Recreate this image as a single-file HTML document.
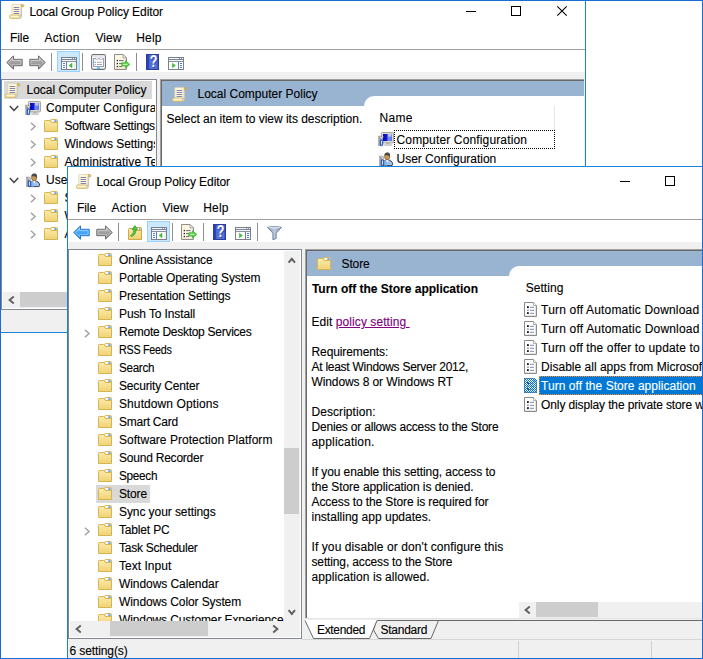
<!DOCTYPE html>
<html><head><meta charset="utf-8"><title>Local Group Policy Editor</title><style>
html,body{margin:0;padding:0;}
body{width:703px;height:659px;position:relative;overflow:hidden;background:#fff;font-family:"Liberation Sans",sans-serif;font-size:12px;color:#000;}
div,span.t,svg{position:absolute;}
span.t{-webkit-text-stroke:0.12px currentColor;white-space:pre;line-height:16px;height:16px;transform-origin:0 50%;}
svg{overflow:visible;}
</style></head><body>
<div style="left:0px;top:0px;width:586px;height:333px;background:#ffffff;border:1px solid #1883d7;box-sizing:border-box;"></div>
<svg style="left:9px;top:4px;" width="16" height="15" viewBox="0 0 16 15"><rect x="11.6" y="1.6" width="1.5" height="10.6" fill="#c4c4c4"/><path d="M2.8 1.4 Q2.8 0.4 3.9 0.4 H12.8 Q11.9 1.3 11.9 3 V11.6 Q11.9 12.8 10.8 12.9 H2.8 Z" fill="#fdf6d6" stroke="#d6cfb4" stroke-width="0.7"/><path d="M12.4 0.5 Q14.9 0.1 15 1.8 Q15 3.1 13 2.9 Q12.2 1.8 12.4 0.5 Z" fill="#e6bf58" stroke="#b8923e" stroke-width="0.5"/><rect x="4.6" y="3" width="5.6" height="1" fill="#8785b4"/><rect x="4.6" y="5" width="5.6" height="1" fill="#8785b4"/><rect x="4.6" y="7" width="5.6" height="1" fill="#8785b4"/><rect x="4.6" y="9" width="5.6" height="1" fill="#8785b4"/><ellipse cx="10.9" cy="12.7" rx="1.5" ry="1.7" fill="#f2f2f2" stroke="#a4a4a4" stroke-width="0.6"/><rect x="0.4" y="11" width="10.6" height="3.4" rx="1.6" fill="#fbe7a2" stroke="#c9ae66" stroke-width="0.8"/><rect x="1.6" y="11.8" width="8" height="1.1" fill="#fffbe6"/></svg>
<span id="t1" class="t" style="left:29.5px;top:4px;letter-spacing:-0.076px;">Local Group Policy Editor</span>
<div style="left:466px;top:11px;width:10px;height:1px;background:#000;"></div>
<div style="left:511px;top:6px;width:10px;height:10px;border:1px solid #000;box-sizing:border-box;"></div>
<svg style="left:557px;top:6px;" width="10" height="10" viewBox="0 0 10 10"><path d="M0.3 0.3 L9.7 9.7 M9.7 0.3 L0.3 9.7" stroke="#000" stroke-width="1.1" fill="none"/></svg>
<span id="t2" class="t" style="left:10.0px;top:30px;letter-spacing:-0.061px;">File</span>
<span id="t3" class="t" style="left:44.5px;top:30px;letter-spacing:0.290px;">Action</span>
<span id="t4" class="t" style="left:95.5px;top:30px;letter-spacing:0.076px;">View</span>
<span id="t5" class="t" style="left:136.3px;top:30px;letter-spacing:0.153px;">Help</span>
<div style="left:1px;top:49px;width:584px;height:1px;background:#a0a0a0;"></div>
<svg style="left:6px;top:55px;" width="17" height="15" viewBox="0 0 17 15"><defs><linearGradient id="ga6_55" x1="0" y1="0" x2="0" y2="1"><stop offset="0" stop-color="#c4c4c4"/><stop offset="1" stop-color="#7e7e7e"/></linearGradient></defs><path d="M0.8 7.5 L7.5 0.8 V4.3 H16.2 V10.7 H7.5 V14.2 Z" fill="url(#ga6_55)" stroke="#6e6e6e" stroke-width="1" stroke-linejoin="round"/><path d="M2.5 7.5 L6.5 3.4 V5.4 H15.1 V9.6 H6.5 V11.6 Z" fill="none" stroke="#ffffff" stroke-opacity="0.42" stroke-width="0.9"/></svg>
<svg style="left:29px;top:55px;" width="17" height="15" viewBox="0 0 17 15"><defs><linearGradient id="ga29_55" x1="0" y1="0" x2="0" y2="1"><stop offset="0" stop-color="#c4c4c4"/><stop offset="1" stop-color="#7e7e7e"/></linearGradient></defs><path d="M0.8 7.5 L7.5 0.8 V4.3 H16.2 V10.7 H7.5 V14.2 Z" transform="translate(17,0) scale(-1,1)" fill="url(#ga29_55)" stroke="#6e6e6e" stroke-width="1" stroke-linejoin="round"/><path d="M2.5 7.5 L6.5 3.4 V5.4 H15.1 V9.6 H6.5 V11.6 Z" transform="translate(17,0) scale(-1,1)" fill="none" stroke="#ffffff" stroke-opacity="0.42" stroke-width="0.9"/></svg>
<div style="left:51px;top:53px;width:1px;height:18px;background:#8e8e8e;"></div>
<div style="left:57px;top:51px;width:23px;height:21px;background:#cce8ff;border:1px solid #99d1ff;box-sizing:border-box;"></div>
<svg style="left:61px;top:57px;shape-rendering:crispEdges;" width="16" height="13" viewBox="0 0 16 13"><rect x="0" y="0" width="16" height="13" fill="#7c8088"/><rect x="1" y="1" width="14" height="1" fill="#f4f6fa"/><rect x="11" y="1" width="1" height="1" fill="#8a8f99"/><rect x="13" y="1" width="1" height="1" fill="#8a8f99"/><rect x="1" y="2" width="14" height="1" fill="#7686a6"/><rect x="1" y="3" width="14" height="1" fill="#f4f6fa"/><rect x="1" y="4" width="14" height="1" fill="#8b909a"/><rect x="1" y="5" width="4" height="7" fill="#ffffff"/><rect x="5" y="5" width="1" height="7" fill="#6c7c9c"/><rect x="6" y="5" width="9" height="7" fill="#ffffff"/><rect x="12.6" y="5.4" width="2" height="6.2" fill="#efefef"/><rect x="2" y="6" width="2" height="1" fill="#3f86d8"/><rect x="2" y="8" width="2" height="1" fill="#3f86d8"/><rect x="2" y="10" width="2" height="1" fill="#3f86d8"/><path d="M8 8.5 L11 6.2 V10.8 Z" fill="#3fc03a" stroke="#35a82f" stroke-width="0.5" shape-rendering="auto"/></svg>
<div style="left:82px;top:53px;width:1px;height:18px;background:#8e8e8e;"></div>
<svg style="left:91px;top:54px;" width="15" height="16" viewBox="0 0 15 16"><rect x="0.6" y="0.6" width="13.8" height="14.8" rx="1.6" fill="#ffffff" stroke="#6f6f74" stroke-width="1.1"/><rect x="1.4" y="1.4" width="12.2" height="1.6" fill="#e4e6ee"/><rect x="2.5" y="4.5" width="10" height="8" fill="#ffffff" stroke="#9c9cc0" stroke-width="1"/><rect x="4.6" y="4" width="3" height="1.6" fill="#ffffff" stroke="#9c9cc0" stroke-width="0.5"/><rect x="8.4" y="4" width="3" height="1.6" fill="#ffffff" stroke="#9c9cc0" stroke-width="0.5"/><rect x="3.6" y="7.6" width="1.3" height="1.3" fill="#28b4f4"/><rect x="6" y="7.8" width="5" height="1" fill="#a8a8a8"/><rect x="3.6" y="10" width="1.3" height="1.1" fill="#a0a0a0"/><rect x="6" y="10" width="5" height="1" fill="#a8a8a8"/><rect x="6" y="13.4" width="3" height="1.4" fill="#25b0f4"/><rect x="10" y="13.6" width="2.4" height="1" fill="#d0d0d0"/></svg>
<svg style="left:114px;top:54px;" width="17" height="16" viewBox="0 0 17 16"><path d="M0.5 0.5 H9 L12.5 4 V15.5 H0.5 Z" fill="#fdf7df" stroke="#8f8f8f" stroke-width="1"/><path d="M9 0.5 V4 H12.5 Z" fill="#ffffff" stroke="#8f8f8f" stroke-width="0.8"/><rect x="11" y="4.4" width="1" height="10.6" fill="#efe6c4"/><rect x="1" y="14" width="11" height="1" fill="#efe6c4"/><rect x="2.7" y="5.9" width="1.3" height="1.3" fill="#222"/><rect x="5" y="6" width="4.6" height="1.1" fill="#74749c"/><rect x="2.7" y="8.9" width="1.3" height="1.3" fill="#222"/><rect x="5" y="9" width="3" height="1.1" fill="#74749c"/><rect x="2.7" y="11.9" width="1.3" height="1.3" fill="#222"/><rect x="5" y="12" width="3" height="1.1" fill="#74749c"/><path d="M7.8 8.8 H11.4 V6.8 L15.8 10.4 L11.4 14 V12 H7.8 Z" fill="#5fd24a" stroke="#3fae33" stroke-width="0.8" stroke-linejoin="round"/><rect x="9" y="9.9" width="4.4" height="1" fill="#c9f5bf"/></svg>
<div style="left:136px;top:53px;width:1px;height:18px;background:#8e8e8e;"></div>
<svg style="left:146px;top:54px;" width="13" height="16" viewBox="0 0 13 16"><rect x="0.5" y="0.5" width="12" height="15" fill="#5470da" stroke="#2b3c9e"/><rect x="1" y="1" width="2.2" height="14" fill="#2d44b4"/><rect x="11" y="1" width="1" height="14" fill="#3f59c6"/><g transform="translate(7.6,0) scale(0.78,1)"><text x="0.8" y="13.7" text-anchor="middle" font-family="Liberation Sans, sans-serif" font-weight="bold" font-size="16" fill="#1d2c7a" opacity="0.6">?</text><text x="0" y="13.2" text-anchor="middle" font-family="Liberation Sans, sans-serif" font-weight="bold" font-size="16" fill="#ffffff">?</text></g></svg>
<svg style="left:168px;top:57px;shape-rendering:crispEdges;" width="16" height="13" viewBox="0 0 16 13"><rect x="0" y="0" width="16" height="13" fill="#7c8088"/><rect x="1" y="1" width="14" height="1" fill="#f4f6fa"/><rect x="11" y="1" width="1" height="1" fill="#8a8f99"/><rect x="13" y="1" width="1" height="1" fill="#8a8f99"/><rect x="1" y="2" width="14" height="1" fill="#7686a6"/><rect x="1" y="3" width="14" height="1" fill="#f4f6fa"/><rect x="1" y="4" width="14" height="1" fill="#8b909a"/><rect x="1" y="5" width="9" height="7" fill="#ffffff"/><rect x="10" y="5" width="1" height="7" fill="#6c7c9c"/><rect x="11" y="5" width="4" height="7" fill="#ffffff"/><rect x="12" y="6" width="2" height="1" fill="#3f86d8"/><rect x="12" y="8" width="2" height="1" fill="#3f86d8"/><rect x="12" y="10" width="2" height="1" fill="#3f86d8"/><path d="M7.4 8.5 L4.4 6.2 V10.8 Z" fill="#3fc03a" stroke="#35a82f" stroke-width="0.5" shape-rendering="auto"/></svg>
<div style="left:1px;top:72px;width:584px;height:260px;background:#f0f0f0;"></div>
<div style="left:1px;top:79px;width:156px;height:231px;background:#fff;border:1px solid #828790;box-sizing:border-box;"></div>
<div style="left:4px;top:81px;width:148px;height:18px;background:#d9d9d9;"></div>
<svg style="left:5px;top:83px;" width="16" height="15" viewBox="0 0 16 15"><rect x="11.6" y="1.6" width="1.5" height="10.6" fill="#c4c4c4"/><path d="M2.8 1.4 Q2.8 0.4 3.9 0.4 H12.8 Q11.9 1.3 11.9 3 V11.6 Q11.9 12.8 10.8 12.9 H2.8 Z" fill="#fdf6d6" stroke="#d6cfb4" stroke-width="0.7"/><path d="M12.4 0.5 Q14.9 0.1 15 1.8 Q15 3.1 13 2.9 Q12.2 1.8 12.4 0.5 Z" fill="#e6bf58" stroke="#b8923e" stroke-width="0.5"/><rect x="4.6" y="3" width="5.6" height="1" fill="#8785b4"/><rect x="4.6" y="5" width="5.6" height="1" fill="#8785b4"/><rect x="4.6" y="7" width="5.6" height="1" fill="#8785b4"/><rect x="4.6" y="9" width="5.6" height="1" fill="#8785b4"/><ellipse cx="10.9" cy="12.7" rx="1.5" ry="1.7" fill="#f2f2f2" stroke="#a4a4a4" stroke-width="0.6"/><rect x="0.4" y="11" width="10.6" height="3.4" rx="1.6" fill="#fbe7a2" stroke="#c9ae66" stroke-width="0.8"/><rect x="1.6" y="11.8" width="8" height="1.1" fill="#fffbe6"/></svg>
<span id="t6" class="t" style="left:26.5px;top:82px;">Local Computer Policy</span>
<div style="left:2px;top:80px;width:153px;height:212px;overflow:hidden;">
<svg style="left:7px;top:25px;" width="10" height="7" viewBox="0 0 10 7"><path d="M0.8 1 L5 5.4 L9.2 1" fill="none" stroke="#404040" stroke-width="1.5"/></svg>
<svg style="left:23px;top:21px;" width="16" height="14" viewBox="0 0 16 14"><defs><linearGradient id="gsc" x1="0" y1="0" x2="1" y2="0"><stop offset="0" stop-color="#0404b8"/><stop offset="0.45" stop-color="#1020d8"/><stop offset="0.55" stop-color="#7f8cf8"/><stop offset="1" stop-color="#5a78f0"/></linearGradient></defs><rect x="0.4" y="4" width="2.4" height="9.8" fill="#a9a9a9" stroke="#8e8e8e" stroke-width="0.4"/><rect x="3.5" y="0.5" width="12" height="10.4" rx="0.8" fill="#dcd9d0" stroke="#a8a59c"/><rect x="5" y="2" width="9" height="7" fill="url(#gsc)"/><rect x="10" y="2" width="3.4" height="2.6" fill="#dfe6ff" opacity="0.7"/><rect x="8" y="11" width="4" height="1.2" fill="#b4b4b4"/><rect x="6.4" y="12.2" width="7.4" height="1.5" rx="0.6" fill="#d4d4d4" stroke="#b0b0b0" stroke-width="0.4"/><path d="M2 4.2 L3.45 6.4 L4.9 4.2" fill="none" stroke="#7c7c7c" stroke-width="1.9"/><path d="M2 4.2 L3.45 6.4 L4.9 4.2" fill="none" stroke="#f6f6f6" stroke-width="1"/><rect x="3" y="6" width="0.9" height="1.8" fill="#e0e0e0"/><rect x="2.1" y="7.6" width="2.8" height="6.2" rx="1.1" fill="#2f5fc8" stroke="#1f45a0" stroke-width="0.5"/><rect x="3.05" y="8.6" width="0.9" height="4" fill="#eaf1ff"/></svg>
<span id="t7" class="t" style="left:44.0px;top:20px;letter-spacing:0.145px;">Computer Configuration</span>
<svg style="left:28px;top:42.4px;" width="7" height="10" viewBox="0 0 7 10"><path d="M0.9 0.8 L5 4.5 L0.9 8.2" fill="none" stroke="#a3a3a3" stroke-width="1.5"/></svg>
<svg style="left:42px;top:39px;" width="14" height="13" viewBox="0 0 14 13"><defs><linearGradient id="gf" x1="0" y1="0" x2="0" y2="1"><stop offset="0" stop-color="#fcebab"/><stop offset="1" stop-color="#f0d274"/></linearGradient></defs><rect x="6.5" y="0.5" width="7" height="5" rx="1" fill="#fbeeb8" stroke="#d9b95c"/><rect x="8" y="1.3" width="4.6" height="1.5" fill="#ffffff"/><rect x="10.3" y="1.3" width="2.3" height="1.5" fill="#3f90ee"/><path d="M0.5 2.3 Q0.5 1.5 1.3 1.5 H5.4 Q6.3 1.5 6.7 2.4 L7.3 3.5 H13.5 V12.5 H0.5 Z" fill="url(#gf)" stroke="#d8b352"/></svg>
<span id="t8" class="t" style="left:62.5px;top:38px;letter-spacing:-0.215px;">Software Settings</span>
<svg style="left:28px;top:60.4px;" width="7" height="10" viewBox="0 0 7 10"><path d="M0.9 0.8 L5 4.5 L0.9 8.2" fill="none" stroke="#a3a3a3" stroke-width="1.5"/></svg>
<svg style="left:42px;top:57px;" width="14" height="13" viewBox="0 0 14 13"><defs><linearGradient id="gf" x1="0" y1="0" x2="0" y2="1"><stop offset="0" stop-color="#fcebab"/><stop offset="1" stop-color="#f0d274"/></linearGradient></defs><rect x="6.5" y="0.5" width="7" height="5" rx="1" fill="#fbeeb8" stroke="#d9b95c"/><rect x="8" y="1.3" width="4.6" height="1.5" fill="#ffffff"/><rect x="10.3" y="1.3" width="2.3" height="1.5" fill="#3f90ee"/><path d="M0.5 2.3 Q0.5 1.5 1.3 1.5 H5.4 Q6.3 1.5 6.7 2.4 L7.3 3.5 H13.5 V12.5 H0.5 Z" fill="url(#gf)" stroke="#d8b352"/></svg>
<span id="t9" class="t" style="left:62.5px;top:56px;letter-spacing:-0.042px;">Windows Settings</span>
<svg style="left:28px;top:78.4px;" width="7" height="10" viewBox="0 0 7 10"><path d="M0.9 0.8 L5 4.5 L0.9 8.2" fill="none" stroke="#a3a3a3" stroke-width="1.5"/></svg>
<svg style="left:42px;top:75px;" width="14" height="13" viewBox="0 0 14 13"><defs><linearGradient id="gf" x1="0" y1="0" x2="0" y2="1"><stop offset="0" stop-color="#fcebab"/><stop offset="1" stop-color="#f0d274"/></linearGradient></defs><rect x="6.5" y="0.5" width="7" height="5" rx="1" fill="#fbeeb8" stroke="#d9b95c"/><rect x="8" y="1.3" width="4.6" height="1.5" fill="#ffffff"/><rect x="10.3" y="1.3" width="2.3" height="1.5" fill="#3f90ee"/><path d="M0.5 2.3 Q0.5 1.5 1.3 1.5 H5.4 Q6.3 1.5 6.7 2.4 L7.3 3.5 H13.5 V12.5 H0.5 Z" fill="url(#gf)" stroke="#d8b352"/></svg>
<span id="t10" class="t" style="left:62.5px;top:74px;letter-spacing:0.094px;">Administrative Templates</span>
<svg style="left:7px;top:97px;" width="10" height="7" viewBox="0 0 10 7"><path d="M0.8 1 L5 5.4 L9.2 1" fill="none" stroke="#404040" stroke-width="1.5"/></svg>
<svg style="left:24px;top:93px;" width="15" height="14" viewBox="0 0 15 14"><rect x="0.4" y="4" width="2.4" height="9.8" fill="#a9a9a9" stroke="#8e8e8e" stroke-width="0.4"/><g transform="translate(-0.7,0)"><path d="M4.6 13.6 Q4.4 8.6 8.6 7.8 Q14.2 8 14.4 12.4 Q14.4 13.6 12.6 13.6 Z" fill="#9cc4ec" stroke="#2a2a38" stroke-width="0.9"/><path d="M4.6 13.6 Q4.4 8.6 8.6 7.8 L9 13.6 Z" fill="#8ab8e8"/><path d="M7.8 8 L9 10.6 L10.4 8 Z" fill="#ffffff"/><ellipse cx="8.8" cy="4.4" rx="2.6" ry="3.4" fill="#c99a56" stroke="#6f5230" stroke-width="0.6"/><path d="M6.2 3.6 Q6.2 0.4 9.4 0.5 Q12.4 0.6 11.6 5.4 Q11 2.6 6.2 3.6 Z" fill="#4a4a48"/></g><path d="M2 4.2 L3.45 6.4 L4.9 4.2" fill="none" stroke="#7c7c7c" stroke-width="1.9"/><path d="M2 4.2 L3.45 6.4 L4.9 4.2" fill="none" stroke="#f6f6f6" stroke-width="1"/><rect x="3" y="6" width="0.9" height="1.8" fill="#e0e0e0"/><rect x="2.1" y="7.6" width="2.8" height="6.2" rx="1.1" fill="#2f5fc8" stroke="#1f45a0" stroke-width="0.5"/><rect x="3.05" y="8.6" width="0.9" height="4" fill="#eaf1ff"/></svg>
<span id="t11" class="t" style="left:44.0px;top:92px;letter-spacing:-0.015px;">User Configuration</span>
<svg style="left:28px;top:114.4px;" width="7" height="10" viewBox="0 0 7 10"><path d="M0.9 0.8 L5 4.5 L0.9 8.2" fill="none" stroke="#a3a3a3" stroke-width="1.5"/></svg>
<svg style="left:42px;top:111px;" width="14" height="13" viewBox="0 0 14 13"><defs><linearGradient id="gf" x1="0" y1="0" x2="0" y2="1"><stop offset="0" stop-color="#fcebab"/><stop offset="1" stop-color="#f0d274"/></linearGradient></defs><rect x="6.5" y="0.5" width="7" height="5" rx="1" fill="#fbeeb8" stroke="#d9b95c"/><rect x="8" y="1.3" width="4.6" height="1.5" fill="#ffffff"/><rect x="10.3" y="1.3" width="2.3" height="1.5" fill="#3f90ee"/><path d="M0.5 2.3 Q0.5 1.5 1.3 1.5 H5.4 Q6.3 1.5 6.7 2.4 L7.3 3.5 H13.5 V12.5 H0.5 Z" fill="url(#gf)" stroke="#d8b352"/></svg>
<span id="t12" class="t" style="left:62.5px;top:110px;letter-spacing:-0.215px;">Software Settings</span>
<svg style="left:28px;top:132.4px;" width="7" height="10" viewBox="0 0 7 10"><path d="M0.9 0.8 L5 4.5 L0.9 8.2" fill="none" stroke="#a3a3a3" stroke-width="1.5"/></svg>
<svg style="left:42px;top:129px;" width="14" height="13" viewBox="0 0 14 13"><defs><linearGradient id="gf" x1="0" y1="0" x2="0" y2="1"><stop offset="0" stop-color="#fcebab"/><stop offset="1" stop-color="#f0d274"/></linearGradient></defs><rect x="6.5" y="0.5" width="7" height="5" rx="1" fill="#fbeeb8" stroke="#d9b95c"/><rect x="8" y="1.3" width="4.6" height="1.5" fill="#ffffff"/><rect x="10.3" y="1.3" width="2.3" height="1.5" fill="#3f90ee"/><path d="M0.5 2.3 Q0.5 1.5 1.3 1.5 H5.4 Q6.3 1.5 6.7 2.4 L7.3 3.5 H13.5 V12.5 H0.5 Z" fill="url(#gf)" stroke="#d8b352"/></svg>
<span id="t13" class="t" style="left:62.5px;top:128px;letter-spacing:-0.042px;">Windows Settings</span>
<svg style="left:28px;top:150.4px;" width="7" height="10" viewBox="0 0 7 10"><path d="M0.9 0.8 L5 4.5 L0.9 8.2" fill="none" stroke="#a3a3a3" stroke-width="1.5"/></svg>
<svg style="left:42px;top:147px;" width="14" height="13" viewBox="0 0 14 13"><defs><linearGradient id="gf" x1="0" y1="0" x2="0" y2="1"><stop offset="0" stop-color="#fcebab"/><stop offset="1" stop-color="#f0d274"/></linearGradient></defs><rect x="6.5" y="0.5" width="7" height="5" rx="1" fill="#fbeeb8" stroke="#d9b95c"/><rect x="8" y="1.3" width="4.6" height="1.5" fill="#ffffff"/><rect x="10.3" y="1.3" width="2.3" height="1.5" fill="#3f90ee"/><path d="M0.5 2.3 Q0.5 1.5 1.3 1.5 H5.4 Q6.3 1.5 6.7 2.4 L7.3 3.5 H13.5 V12.5 H0.5 Z" fill="url(#gf)" stroke="#d8b352"/></svg>
<span id="t14" class="t" style="left:62.5px;top:146px;letter-spacing:0.094px;">Administrative Templates</span>
</div>
<div style="left:3px;top:292px;width:152px;height:16px;background:#f0f0f0;"></div>
<svg style="left:8px;top:296px;" width="7" height="8" viewBox="0 0 7 8"><path d="M5.8 0.6 L1.6 4 L5.8 7.4" fill="none" stroke="#606060" stroke-width="1.9"/></svg>
<div style="left:20px;top:292px;width:100px;height:15px;background:#cdcdcd;"></div>
<div style="left:160px;top:79px;width:424px;height:231px;background:#fff;border-left:1px solid #a0a0a0;border-top:1px solid #a0a0a0;box-sizing:border-box;"></div>
<div style="left:161px;top:80px;width:423px;height:230px;background:#fff;border-left:1px solid #696969;border-top:1px solid #696969;box-sizing:border-box;"></div>
<div style="left:162px;top:81px;width:422px;height:25px;background:#99b4d1;"></div>
<div style="left:364px;top:96px;width:220px;height:12px;background:#fff;border-top-left-radius:10px;"></div>
<svg style="left:172px;top:87px;" width="16" height="15" viewBox="0 0 16 15"><rect x="11.6" y="1.6" width="1.5" height="10.6" fill="#c4c4c4"/><path d="M2.8 1.4 Q2.8 0.4 3.9 0.4 H12.8 Q11.9 1.3 11.9 3 V11.6 Q11.9 12.8 10.8 12.9 H2.8 Z" fill="#fdf6d6" stroke="#d6cfb4" stroke-width="0.7"/><path d="M12.4 0.5 Q14.9 0.1 15 1.8 Q15 3.1 13 2.9 Q12.2 1.8 12.4 0.5 Z" fill="#e6bf58" stroke="#b8923e" stroke-width="0.5"/><rect x="4.6" y="3" width="5.6" height="1" fill="#8785b4"/><rect x="4.6" y="5" width="5.6" height="1" fill="#8785b4"/><rect x="4.6" y="7" width="5.6" height="1" fill="#8785b4"/><rect x="4.6" y="9" width="5.6" height="1" fill="#8785b4"/><ellipse cx="10.9" cy="12.7" rx="1.5" ry="1.7" fill="#f2f2f2" stroke="#a4a4a4" stroke-width="0.6"/><rect x="0.4" y="11" width="10.6" height="3.4" rx="1.6" fill="#fbe7a2" stroke="#c9ae66" stroke-width="0.8"/><rect x="1.6" y="11.8" width="8" height="1.1" fill="#fffbe6"/></svg>
<span id="t15" class="t" style="left:197.5px;top:86px;">Local Computer Policy</span>
<span id="t16" class="t" style="left:166.5px;top:111px;letter-spacing:-0.027px;">Select an item to view its description.</span>
<span id="t17" class="t" style="left:379.5px;top:110px;letter-spacing:0.271px;">Name</span>
<div style="left:554px;top:106px;width:1px;height:24px;background:#e5e5e5;"></div>
<svg style="left:378px;top:132px;" width="16" height="14" viewBox="0 0 16 14"><defs><linearGradient id="gsc" x1="0" y1="0" x2="1" y2="0"><stop offset="0" stop-color="#0404b8"/><stop offset="0.45" stop-color="#1020d8"/><stop offset="0.55" stop-color="#7f8cf8"/><stop offset="1" stop-color="#5a78f0"/></linearGradient></defs><rect x="0.4" y="4" width="2.4" height="9.8" fill="#a9a9a9" stroke="#8e8e8e" stroke-width="0.4"/><rect x="3.5" y="0.5" width="12" height="10.4" rx="0.8" fill="#dcd9d0" stroke="#a8a59c"/><rect x="5" y="2" width="9" height="7" fill="url(#gsc)"/><rect x="10" y="2" width="3.4" height="2.6" fill="#dfe6ff" opacity="0.7"/><rect x="8" y="11" width="4" height="1.2" fill="#b4b4b4"/><rect x="6.4" y="12.2" width="7.4" height="1.5" rx="0.6" fill="#d4d4d4" stroke="#b0b0b0" stroke-width="0.4"/><path d="M2 4.2 L3.45 6.4 L4.9 4.2" fill="none" stroke="#7c7c7c" stroke-width="1.9"/><path d="M2 4.2 L3.45 6.4 L4.9 4.2" fill="none" stroke="#f6f6f6" stroke-width="1"/><rect x="3" y="6" width="0.9" height="1.8" fill="#e0e0e0"/><rect x="2.1" y="7.6" width="2.8" height="6.2" rx="1.1" fill="#2f5fc8" stroke="#1f45a0" stroke-width="0.5"/><rect x="3.05" y="8.6" width="0.9" height="4" fill="#eaf1ff"/></svg>
<span id="t18" class="t" style="left:396.5px;top:132px;letter-spacing:0.145px;">Computer Configuration</span>
<div style="left:394px;top:130px;width:161px;height:19px;border:1px dotted #000;box-sizing:border-box;"></div>
<svg style="left:379px;top:152px;" width="15" height="14" viewBox="0 0 15 14"><rect x="0.4" y="4" width="2.4" height="9.8" fill="#a9a9a9" stroke="#8e8e8e" stroke-width="0.4"/><g transform="translate(-0.7,0)"><path d="M4.6 13.6 Q4.4 8.6 8.6 7.8 Q14.2 8 14.4 12.4 Q14.4 13.6 12.6 13.6 Z" fill="#9cc4ec" stroke="#2a2a38" stroke-width="0.9"/><path d="M4.6 13.6 Q4.4 8.6 8.6 7.8 L9 13.6 Z" fill="#8ab8e8"/><path d="M7.8 8 L9 10.6 L10.4 8 Z" fill="#ffffff"/><ellipse cx="8.8" cy="4.4" rx="2.6" ry="3.4" fill="#c99a56" stroke="#6f5230" stroke-width="0.6"/><path d="M6.2 3.6 Q6.2 0.4 9.4 0.5 Q12.4 0.6 11.6 5.4 Q11 2.6 6.2 3.6 Z" fill="#4a4a48"/></g><path d="M2 4.2 L3.45 6.4 L4.9 4.2" fill="none" stroke="#7c7c7c" stroke-width="1.9"/><path d="M2 4.2 L3.45 6.4 L4.9 4.2" fill="none" stroke="#f6f6f6" stroke-width="1"/><rect x="3" y="6" width="0.9" height="1.8" fill="#e0e0e0"/><rect x="2.1" y="7.6" width="2.8" height="6.2" rx="1.1" fill="#2f5fc8" stroke="#1f45a0" stroke-width="0.5"/><rect x="3.05" y="8.6" width="0.9" height="4" fill="#eaf1ff"/></svg>
<span id="t19" class="t" style="left:396.5px;top:151px;letter-spacing:-0.015px;">User Configuration</span>
<div style="left:67px;top:166px;width:640px;height:493px;background:#ffffff;border:1px solid #1883d7;box-sizing:border-box;"></div>
<svg style="left:76px;top:174px;" width="16" height="15" viewBox="0 0 16 15"><rect x="11.6" y="1.6" width="1.5" height="10.6" fill="#c4c4c4"/><path d="M2.8 1.4 Q2.8 0.4 3.9 0.4 H12.8 Q11.9 1.3 11.9 3 V11.6 Q11.9 12.8 10.8 12.9 H2.8 Z" fill="#fdf6d6" stroke="#d6cfb4" stroke-width="0.7"/><path d="M12.4 0.5 Q14.9 0.1 15 1.8 Q15 3.1 13 2.9 Q12.2 1.8 12.4 0.5 Z" fill="#e6bf58" stroke="#b8923e" stroke-width="0.5"/><rect x="4.6" y="3" width="5.6" height="1" fill="#8785b4"/><rect x="4.6" y="5" width="5.6" height="1" fill="#8785b4"/><rect x="4.6" y="7" width="5.6" height="1" fill="#8785b4"/><rect x="4.6" y="9" width="5.6" height="1" fill="#8785b4"/><ellipse cx="10.9" cy="12.7" rx="1.5" ry="1.7" fill="#f2f2f2" stroke="#a4a4a4" stroke-width="0.6"/><rect x="0.4" y="11" width="10.6" height="3.4" rx="1.6" fill="#fbe7a2" stroke="#c9ae66" stroke-width="0.8"/><rect x="1.6" y="11.8" width="8" height="1.1" fill="#fffbe6"/></svg>
<span id="t20" class="t" style="left:96.5px;top:174px;letter-spacing:-0.076px;">Local Group Policy Editor</span>
<div style="left:620px;top:181px;width:10px;height:1px;background:#000;"></div>
<div style="left:665px;top:176px;width:10px;height:10px;border:1px solid #000;box-sizing:border-box;"></div>
<span id="t21" class="t" style="left:77.0px;top:200px;letter-spacing:-0.061px;">File</span>
<span id="t22" class="t" style="left:111.5px;top:200px;letter-spacing:0.290px;">Action</span>
<span id="t23" class="t" style="left:162.5px;top:200px;letter-spacing:0.076px;">View</span>
<span id="t24" class="t" style="left:203.3px;top:200px;letter-spacing:0.153px;">Help</span>
<div style="left:68px;top:219px;width:640px;height:1px;background:#a0a0a0;"></div>
<svg style="left:73px;top:225px;" width="17" height="15" viewBox="0 0 17 15"><defs><linearGradient id="ga73_225" x1="0" y1="0" x2="0" y2="1"><stop offset="0" stop-color="#6cc4ff"/><stop offset="1" stop-color="#2288f0"/></linearGradient></defs><path d="M0.8 7.5 L7.5 0.8 V4.3 H16.2 V10.7 H7.5 V14.2 Z" fill="url(#ga73_225)" stroke="#1f76d6" stroke-width="1" stroke-linejoin="round"/><path d="M2.5 7.5 L6.5 3.4 V5.4 H15.1 V9.6 H6.5 V11.6 Z" fill="none" stroke="#ffffff" stroke-opacity="0.42" stroke-width="0.9"/></svg>
<svg style="left:96px;top:225px;" width="17" height="15" viewBox="0 0 17 15"><defs><linearGradient id="ga96_225" x1="0" y1="0" x2="0" y2="1"><stop offset="0" stop-color="#c4c4c4"/><stop offset="1" stop-color="#7e7e7e"/></linearGradient></defs><path d="M0.8 7.5 L7.5 0.8 V4.3 H16.2 V10.7 H7.5 V14.2 Z" transform="translate(17,0) scale(-1,1)" fill="url(#ga96_225)" stroke="#6e6e6e" stroke-width="1" stroke-linejoin="round"/><path d="M2.5 7.5 L6.5 3.4 V5.4 H15.1 V9.6 H6.5 V11.6 Z" transform="translate(17,0) scale(-1,1)" fill="none" stroke="#ffffff" stroke-opacity="0.42" stroke-width="0.9"/></svg>
<div style="left:118px;top:223px;width:1px;height:18px;background:#8e8e8e;"></div>
<svg style="left:128px;top:225px;" width="14" height="15" viewBox="0 0 14 15"><defs><linearGradient id="guf" x1="0" y1="0" x2="0" y2="1"><stop offset="0" stop-color="#fbe9a8"/><stop offset="1" stop-color="#efcf72"/></linearGradient></defs><rect x="6.5" y="2.5" width="7" height="5" rx="1" fill="#fbeeb8" stroke="#d2ac50"/><rect x="9.6" y="3.3" width="3" height="1.3" fill="#ffffff"/><rect x="11" y="3.3" width="1.6" height="1.3" fill="#3f90ee"/><path d="M0.5 4.3 Q0.5 3.5 1.3 3.5 H5.4 Q6.3 3.5 6.7 4.4 L7.3 5.5 H13.5 V14.5 H0.5 Z" fill="url(#guf)" stroke="#d0a84a"/><path d="M2.4 10.6 Q5.8 9.4 6 4.4 L4 4.6 L6.8 0.5 L9.6 4.4 L8 4.4 Q8 10 3.4 11.4 Z" fill="#4ec440" stroke="#2f9a2a" stroke-width="0.7" stroke-linejoin="round"/></svg>
<div style="left:147px;top:221px;width:23px;height:21px;background:#cce8ff;border:1px solid #99d1ff;box-sizing:border-box;"></div>
<svg style="left:151px;top:227px;shape-rendering:crispEdges;" width="16" height="13" viewBox="0 0 16 13"><rect x="0" y="0" width="16" height="13" fill="#7c8088"/><rect x="1" y="1" width="14" height="1" fill="#f4f6fa"/><rect x="11" y="1" width="1" height="1" fill="#8a8f99"/><rect x="13" y="1" width="1" height="1" fill="#8a8f99"/><rect x="1" y="2" width="14" height="1" fill="#7686a6"/><rect x="1" y="3" width="14" height="1" fill="#f4f6fa"/><rect x="1" y="4" width="14" height="1" fill="#8b909a"/><rect x="1" y="5" width="4" height="7" fill="#ffffff"/><rect x="5" y="5" width="1" height="7" fill="#6c7c9c"/><rect x="6" y="5" width="9" height="7" fill="#ffffff"/><rect x="12.6" y="5.4" width="2" height="6.2" fill="#efefef"/><rect x="2" y="6" width="2" height="1" fill="#3f86d8"/><rect x="2" y="8" width="2" height="1" fill="#3f86d8"/><rect x="2" y="10" width="2" height="1" fill="#3f86d8"/><path d="M8 8.5 L11 6.2 V10.8 Z" fill="#3fc03a" stroke="#35a82f" stroke-width="0.5" shape-rendering="auto"/></svg>
<div style="left:172px;top:223px;width:1px;height:18px;background:#8e8e8e;"></div>
<svg style="left:181px;top:224px;" width="17" height="16" viewBox="0 0 17 16"><path d="M0.5 0.5 H9 L12.5 4 V15.5 H0.5 Z" fill="#fdf7df" stroke="#8f8f8f" stroke-width="1"/><path d="M9 0.5 V4 H12.5 Z" fill="#ffffff" stroke="#8f8f8f" stroke-width="0.8"/><rect x="11" y="4.4" width="1" height="10.6" fill="#efe6c4"/><rect x="1" y="14" width="11" height="1" fill="#efe6c4"/><rect x="2.7" y="5.9" width="1.3" height="1.3" fill="#222"/><rect x="5" y="6" width="4.6" height="1.1" fill="#74749c"/><rect x="2.7" y="8.9" width="1.3" height="1.3" fill="#222"/><rect x="5" y="9" width="3" height="1.1" fill="#74749c"/><rect x="2.7" y="11.9" width="1.3" height="1.3" fill="#222"/><rect x="5" y="12" width="3" height="1.1" fill="#74749c"/><path d="M7.8 8.8 H11.4 V6.8 L15.8 10.4 L11.4 14 V12 H7.8 Z" fill="#5fd24a" stroke="#3fae33" stroke-width="0.8" stroke-linejoin="round"/><rect x="9" y="9.9" width="4.4" height="1" fill="#c9f5bf"/></svg>
<div style="left:203px;top:223px;width:1px;height:18px;background:#8e8e8e;"></div>
<svg style="left:213px;top:224px;" width="13" height="16" viewBox="0 0 13 16"><rect x="0.5" y="0.5" width="12" height="15" fill="#5470da" stroke="#2b3c9e"/><rect x="1" y="1" width="2.2" height="14" fill="#2d44b4"/><rect x="11" y="1" width="1" height="14" fill="#3f59c6"/><g transform="translate(7.6,0) scale(0.78,1)"><text x="0.8" y="13.7" text-anchor="middle" font-family="Liberation Sans, sans-serif" font-weight="bold" font-size="16" fill="#1d2c7a" opacity="0.6">?</text><text x="0" y="13.2" text-anchor="middle" font-family="Liberation Sans, sans-serif" font-weight="bold" font-size="16" fill="#ffffff">?</text></g></svg>
<svg style="left:235px;top:227px;shape-rendering:crispEdges;" width="16" height="13" viewBox="0 0 16 13"><rect x="0" y="0" width="16" height="13" fill="#7c8088"/><rect x="1" y="1" width="14" height="1" fill="#f4f6fa"/><rect x="11" y="1" width="1" height="1" fill="#8a8f99"/><rect x="13" y="1" width="1" height="1" fill="#8a8f99"/><rect x="1" y="2" width="14" height="1" fill="#7686a6"/><rect x="1" y="3" width="14" height="1" fill="#f4f6fa"/><rect x="1" y="4" width="14" height="1" fill="#8b909a"/><rect x="1" y="5" width="9" height="7" fill="#ffffff"/><rect x="10" y="5" width="1" height="7" fill="#6c7c9c"/><rect x="11" y="5" width="4" height="7" fill="#ffffff"/><rect x="12" y="6" width="2" height="1" fill="#3f86d8"/><rect x="12" y="8" width="2" height="1" fill="#3f86d8"/><rect x="12" y="10" width="2" height="1" fill="#3f86d8"/><path d="M7.4 8.5 L4.4 6.2 V10.8 Z" fill="#3fc03a" stroke="#35a82f" stroke-width="0.5" shape-rendering="auto"/></svg>
<div style="left:257px;top:223px;width:1px;height:18px;background:#8e8e8e;"></div>
<svg style="left:267px;top:226px;" width="15" height="14" viewBox="0 0 15 14"><defs><linearGradient id="gfl" x1="0" y1="0" x2="1" y2="0"><stop offset="0" stop-color="#8097b4"/><stop offset="0.5" stop-color="#bccadc"/><stop offset="1" stop-color="#768dab"/></linearGradient></defs><path d="M0.5 1.3 Q7.5 -0.4 14.5 1.3 L9.2 7.2 V12.4 L5.9 13.8 V7.2 Z" fill="url(#gfl)" stroke="#677c99" stroke-width="0.9" stroke-linejoin="round"/><ellipse cx="7.5" cy="1.6" rx="6.2" ry="0.8" fill="#d6dfeb"/></svg>
<div style="left:68px;top:242px;width:640px;height:416px;background:#f0f0f0;"></div>
<div style="left:68px;top:249px;width:234px;height:390px;background:#fff;border:1px solid #828790;box-sizing:border-box;"></div>
<div style="left:69px;top:250px;width:215px;height:371px;overflow:hidden;">
<svg style="left:29px;top:3px;" width="14" height="13" viewBox="0 0 14 13"><defs><linearGradient id="gf" x1="0" y1="0" x2="0" y2="1"><stop offset="0" stop-color="#fcebab"/><stop offset="1" stop-color="#f0d274"/></linearGradient></defs><rect x="6.5" y="0.5" width="7" height="5" rx="1" fill="#fbeeb8" stroke="#d9b95c"/><rect x="8" y="1.3" width="4.6" height="1.5" fill="#ffffff"/><rect x="10.3" y="1.3" width="2.3" height="1.5" fill="#3f90ee"/><path d="M0.5 2.3 Q0.5 1.5 1.3 1.5 H5.4 Q6.3 1.5 6.7 2.4 L7.3 3.5 H13.5 V12.5 H0.5 Z" fill="url(#gf)" stroke="#d8b352"/></svg>
<span id="t25" class="t" style="left:50.0px;top:2px;letter-spacing:-0.111px;">Online Assistance</span>
<svg style="left:29px;top:21px;" width="14" height="13" viewBox="0 0 14 13"><defs><linearGradient id="gf" x1="0" y1="0" x2="0" y2="1"><stop offset="0" stop-color="#fcebab"/><stop offset="1" stop-color="#f0d274"/></linearGradient></defs><rect x="6.5" y="0.5" width="7" height="5" rx="1" fill="#fbeeb8" stroke="#d9b95c"/><rect x="8" y="1.3" width="4.6" height="1.5" fill="#ffffff"/><rect x="10.3" y="1.3" width="2.3" height="1.5" fill="#3f90ee"/><path d="M0.5 2.3 Q0.5 1.5 1.3 1.5 H5.4 Q6.3 1.5 6.7 2.4 L7.3 3.5 H13.5 V12.5 H0.5 Z" fill="url(#gf)" stroke="#d8b352"/></svg>
<span id="t26" class="t" style="left:50.0px;top:20px;letter-spacing:-0.107px;">Portable Operating System</span>
<svg style="left:29px;top:39px;" width="14" height="13" viewBox="0 0 14 13"><defs><linearGradient id="gf" x1="0" y1="0" x2="0" y2="1"><stop offset="0" stop-color="#fcebab"/><stop offset="1" stop-color="#f0d274"/></linearGradient></defs><rect x="6.5" y="0.5" width="7" height="5" rx="1" fill="#fbeeb8" stroke="#d9b95c"/><rect x="8" y="1.3" width="4.6" height="1.5" fill="#ffffff"/><rect x="10.3" y="1.3" width="2.3" height="1.5" fill="#3f90ee"/><path d="M0.5 2.3 Q0.5 1.5 1.3 1.5 H5.4 Q6.3 1.5 6.7 2.4 L7.3 3.5 H13.5 V12.5 H0.5 Z" fill="url(#gf)" stroke="#d8b352"/></svg>
<span id="t27" class="t" style="left:50.0px;top:38px;letter-spacing:-0.128px;">Presentation Settings</span>
<svg style="left:29px;top:57px;" width="14" height="13" viewBox="0 0 14 13"><defs><linearGradient id="gf" x1="0" y1="0" x2="0" y2="1"><stop offset="0" stop-color="#fcebab"/><stop offset="1" stop-color="#f0d274"/></linearGradient></defs><rect x="6.5" y="0.5" width="7" height="5" rx="1" fill="#fbeeb8" stroke="#d9b95c"/><rect x="8" y="1.3" width="4.6" height="1.5" fill="#ffffff"/><rect x="10.3" y="1.3" width="2.3" height="1.5" fill="#3f90ee"/><path d="M0.5 2.3 Q0.5 1.5 1.3 1.5 H5.4 Q6.3 1.5 6.7 2.4 L7.3 3.5 H13.5 V12.5 H0.5 Z" fill="url(#gf)" stroke="#d8b352"/></svg>
<span id="t28" class="t" style="left:50.0px;top:56px;letter-spacing:-0.115px;">Push To Install</span>
<svg style="left:15px;top:79px;" width="7" height="10" viewBox="0 0 7 10"><path d="M0.9 0.8 L5 4.5 L0.9 8.2" fill="none" stroke="#a3a3a3" stroke-width="1.5"/></svg>
<svg style="left:29px;top:75px;" width="14" height="13" viewBox="0 0 14 13"><defs><linearGradient id="gf" x1="0" y1="0" x2="0" y2="1"><stop offset="0" stop-color="#fcebab"/><stop offset="1" stop-color="#f0d274"/></linearGradient></defs><rect x="6.5" y="0.5" width="7" height="5" rx="1" fill="#fbeeb8" stroke="#d9b95c"/><rect x="8" y="1.3" width="4.6" height="1.5" fill="#ffffff"/><rect x="10.3" y="1.3" width="2.3" height="1.5" fill="#3f90ee"/><path d="M0.5 2.3 Q0.5 1.5 1.3 1.5 H5.4 Q6.3 1.5 6.7 2.4 L7.3 3.5 H13.5 V12.5 H0.5 Z" fill="url(#gf)" stroke="#d8b352"/></svg>
<span id="t29" class="t" style="left:50.0px;top:74px;letter-spacing:-0.275px;">Remote Desktop Services</span>
<svg style="left:29px;top:93px;" width="14" height="13" viewBox="0 0 14 13"><defs><linearGradient id="gf" x1="0" y1="0" x2="0" y2="1"><stop offset="0" stop-color="#fcebab"/><stop offset="1" stop-color="#f0d274"/></linearGradient></defs><rect x="6.5" y="0.5" width="7" height="5" rx="1" fill="#fbeeb8" stroke="#d9b95c"/><rect x="8" y="1.3" width="4.6" height="1.5" fill="#ffffff"/><rect x="10.3" y="1.3" width="2.3" height="1.5" fill="#3f90ee"/><path d="M0.5 2.3 Q0.5 1.5 1.3 1.5 H5.4 Q6.3 1.5 6.7 2.4 L7.3 3.5 H13.5 V12.5 H0.5 Z" fill="url(#gf)" stroke="#d8b352"/></svg>
<span id="t30" class="t" style="left:50.0px;top:92px;letter-spacing:-0.300px;transform:scaleX(0.8950);">RSS Feeds</span>
<svg style="left:29px;top:111px;" width="14" height="13" viewBox="0 0 14 13"><defs><linearGradient id="gf" x1="0" y1="0" x2="0" y2="1"><stop offset="0" stop-color="#fcebab"/><stop offset="1" stop-color="#f0d274"/></linearGradient></defs><rect x="6.5" y="0.5" width="7" height="5" rx="1" fill="#fbeeb8" stroke="#d9b95c"/><rect x="8" y="1.3" width="4.6" height="1.5" fill="#ffffff"/><rect x="10.3" y="1.3" width="2.3" height="1.5" fill="#3f90ee"/><path d="M0.5 2.3 Q0.5 1.5 1.3 1.5 H5.4 Q6.3 1.5 6.7 2.4 L7.3 3.5 H13.5 V12.5 H0.5 Z" fill="url(#gf)" stroke="#d8b352"/></svg>
<span id="t31" class="t" style="left:50.0px;top:110px;letter-spacing:-0.300px;transform:scaleX(0.9688);">Search</span>
<svg style="left:29px;top:129px;" width="14" height="13" viewBox="0 0 14 13"><defs><linearGradient id="gf" x1="0" y1="0" x2="0" y2="1"><stop offset="0" stop-color="#fcebab"/><stop offset="1" stop-color="#f0d274"/></linearGradient></defs><rect x="6.5" y="0.5" width="7" height="5" rx="1" fill="#fbeeb8" stroke="#d9b95c"/><rect x="8" y="1.3" width="4.6" height="1.5" fill="#ffffff"/><rect x="10.3" y="1.3" width="2.3" height="1.5" fill="#3f90ee"/><path d="M0.5 2.3 Q0.5 1.5 1.3 1.5 H5.4 Q6.3 1.5 6.7 2.4 L7.3 3.5 H13.5 V12.5 H0.5 Z" fill="url(#gf)" stroke="#d8b352"/></svg>
<span id="t32" class="t" style="left:50.0px;top:128px;letter-spacing:-0.154px;">Security Center</span>
<svg style="left:29px;top:147px;" width="14" height="13" viewBox="0 0 14 13"><defs><linearGradient id="gf" x1="0" y1="0" x2="0" y2="1"><stop offset="0" stop-color="#fcebab"/><stop offset="1" stop-color="#f0d274"/></linearGradient></defs><rect x="6.5" y="0.5" width="7" height="5" rx="1" fill="#fbeeb8" stroke="#d9b95c"/><rect x="8" y="1.3" width="4.6" height="1.5" fill="#ffffff"/><rect x="10.3" y="1.3" width="2.3" height="1.5" fill="#3f90ee"/><path d="M0.5 2.3 Q0.5 1.5 1.3 1.5 H5.4 Q6.3 1.5 6.7 2.4 L7.3 3.5 H13.5 V12.5 H0.5 Z" fill="url(#gf)" stroke="#d8b352"/></svg>
<span id="t33" class="t" style="left:50.0px;top:146px;letter-spacing:0.096px;">Shutdown Options</span>
<svg style="left:29px;top:165px;" width="14" height="13" viewBox="0 0 14 13"><defs><linearGradient id="gf" x1="0" y1="0" x2="0" y2="1"><stop offset="0" stop-color="#fcebab"/><stop offset="1" stop-color="#f0d274"/></linearGradient></defs><rect x="6.5" y="0.5" width="7" height="5" rx="1" fill="#fbeeb8" stroke="#d9b95c"/><rect x="8" y="1.3" width="4.6" height="1.5" fill="#ffffff"/><rect x="10.3" y="1.3" width="2.3" height="1.5" fill="#3f90ee"/><path d="M0.5 2.3 Q0.5 1.5 1.3 1.5 H5.4 Q6.3 1.5 6.7 2.4 L7.3 3.5 H13.5 V12.5 H0.5 Z" fill="url(#gf)" stroke="#d8b352"/></svg>
<span id="t34" class="t" style="left:50.0px;top:164px;letter-spacing:-0.246px;">Smart Card</span>
<svg style="left:29px;top:183px;" width="14" height="13" viewBox="0 0 14 13"><defs><linearGradient id="gf" x1="0" y1="0" x2="0" y2="1"><stop offset="0" stop-color="#fcebab"/><stop offset="1" stop-color="#f0d274"/></linearGradient></defs><rect x="6.5" y="0.5" width="7" height="5" rx="1" fill="#fbeeb8" stroke="#d9b95c"/><rect x="8" y="1.3" width="4.6" height="1.5" fill="#ffffff"/><rect x="10.3" y="1.3" width="2.3" height="1.5" fill="#3f90ee"/><path d="M0.5 2.3 Q0.5 1.5 1.3 1.5 H5.4 Q6.3 1.5 6.7 2.4 L7.3 3.5 H13.5 V12.5 H0.5 Z" fill="url(#gf)" stroke="#d8b352"/></svg>
<span id="t35" class="t" style="left:50.0px;top:182px;letter-spacing:0.024px;">Software Protection Platform</span>
<svg style="left:29px;top:201px;" width="14" height="13" viewBox="0 0 14 13"><defs><linearGradient id="gf" x1="0" y1="0" x2="0" y2="1"><stop offset="0" stop-color="#fcebab"/><stop offset="1" stop-color="#f0d274"/></linearGradient></defs><rect x="6.5" y="0.5" width="7" height="5" rx="1" fill="#fbeeb8" stroke="#d9b95c"/><rect x="8" y="1.3" width="4.6" height="1.5" fill="#ffffff"/><rect x="10.3" y="1.3" width="2.3" height="1.5" fill="#3f90ee"/><path d="M0.5 2.3 Q0.5 1.5 1.3 1.5 H5.4 Q6.3 1.5 6.7 2.4 L7.3 3.5 H13.5 V12.5 H0.5 Z" fill="url(#gf)" stroke="#d8b352"/></svg>
<span id="t36" class="t" style="left:50.0px;top:200px;letter-spacing:-0.221px;">Sound Recorder</span>
<svg style="left:29px;top:219px;" width="14" height="13" viewBox="0 0 14 13"><defs><linearGradient id="gf" x1="0" y1="0" x2="0" y2="1"><stop offset="0" stop-color="#fcebab"/><stop offset="1" stop-color="#f0d274"/></linearGradient></defs><rect x="6.5" y="0.5" width="7" height="5" rx="1" fill="#fbeeb8" stroke="#d9b95c"/><rect x="8" y="1.3" width="4.6" height="1.5" fill="#ffffff"/><rect x="10.3" y="1.3" width="2.3" height="1.5" fill="#3f90ee"/><path d="M0.5 2.3 Q0.5 1.5 1.3 1.5 H5.4 Q6.3 1.5 6.7 2.4 L7.3 3.5 H13.5 V12.5 H0.5 Z" fill="url(#gf)" stroke="#d8b352"/></svg>
<span id="t37" class="t" style="left:50.0px;top:218px;letter-spacing:-0.300px;transform:scaleX(0.9819);">Speech</span>
<div style="left:27px;top:235px;width:54px;height:18px;background:#d9d9d9;"></div>
<svg style="left:29px;top:237px;" width="14" height="13" viewBox="0 0 14 13"><defs><linearGradient id="gf" x1="0" y1="0" x2="0" y2="1"><stop offset="0" stop-color="#fcebab"/><stop offset="1" stop-color="#f0d274"/></linearGradient></defs><rect x="6.5" y="0.5" width="7" height="5" rx="1" fill="#fbeeb8" stroke="#d9b95c"/><rect x="8" y="1.3" width="4.6" height="1.5" fill="#ffffff"/><rect x="10.3" y="1.3" width="2.3" height="1.5" fill="#3f90ee"/><path d="M0.5 2.3 Q0.5 1.5 1.3 1.5 H5.4 Q6.3 1.5 6.7 2.4 L7.3 3.5 H13.5 V12.5 H0.5 Z" fill="url(#gf)" stroke="#d8b352"/></svg>
<span id="t38" class="t" style="left:50.0px;top:236px;letter-spacing:-0.138px;">Store</span>
<svg style="left:29px;top:255px;" width="14" height="13" viewBox="0 0 14 13"><defs><linearGradient id="gf" x1="0" y1="0" x2="0" y2="1"><stop offset="0" stop-color="#fcebab"/><stop offset="1" stop-color="#f0d274"/></linearGradient></defs><rect x="6.5" y="0.5" width="7" height="5" rx="1" fill="#fbeeb8" stroke="#d9b95c"/><rect x="8" y="1.3" width="4.6" height="1.5" fill="#ffffff"/><rect x="10.3" y="1.3" width="2.3" height="1.5" fill="#3f90ee"/><path d="M0.5 2.3 Q0.5 1.5 1.3 1.5 H5.4 Q6.3 1.5 6.7 2.4 L7.3 3.5 H13.5 V12.5 H0.5 Z" fill="url(#gf)" stroke="#d8b352"/></svg>
<span id="t39" class="t" style="left:50.0px;top:254px;letter-spacing:-0.080px;">Sync your settings</span>
<svg style="left:15px;top:277px;" width="7" height="10" viewBox="0 0 7 10"><path d="M0.9 0.8 L5 4.5 L0.9 8.2" fill="none" stroke="#a3a3a3" stroke-width="1.5"/></svg>
<svg style="left:29px;top:273px;" width="14" height="13" viewBox="0 0 14 13"><defs><linearGradient id="gf" x1="0" y1="0" x2="0" y2="1"><stop offset="0" stop-color="#fcebab"/><stop offset="1" stop-color="#f0d274"/></linearGradient></defs><rect x="6.5" y="0.5" width="7" height="5" rx="1" fill="#fbeeb8" stroke="#d9b95c"/><rect x="8" y="1.3" width="4.6" height="1.5" fill="#ffffff"/><rect x="10.3" y="1.3" width="2.3" height="1.5" fill="#3f90ee"/><path d="M0.5 2.3 Q0.5 1.5 1.3 1.5 H5.4 Q6.3 1.5 6.7 2.4 L7.3 3.5 H13.5 V12.5 H0.5 Z" fill="url(#gf)" stroke="#d8b352"/></svg>
<span id="t40" class="t" style="left:50.0px;top:272px;letter-spacing:-0.170px;">Tablet PC</span>
<svg style="left:29px;top:291px;" width="14" height="13" viewBox="0 0 14 13"><defs><linearGradient id="gf" x1="0" y1="0" x2="0" y2="1"><stop offset="0" stop-color="#fcebab"/><stop offset="1" stop-color="#f0d274"/></linearGradient></defs><rect x="6.5" y="0.5" width="7" height="5" rx="1" fill="#fbeeb8" stroke="#d9b95c"/><rect x="8" y="1.3" width="4.6" height="1.5" fill="#ffffff"/><rect x="10.3" y="1.3" width="2.3" height="1.5" fill="#3f90ee"/><path d="M0.5 2.3 Q0.5 1.5 1.3 1.5 H5.4 Q6.3 1.5 6.7 2.4 L7.3 3.5 H13.5 V12.5 H0.5 Z" fill="url(#gf)" stroke="#d8b352"/></svg>
<span id="t41" class="t" style="left:50.0px;top:290px;letter-spacing:-0.246px;">Task Scheduler</span>
<svg style="left:29px;top:309px;" width="14" height="13" viewBox="0 0 14 13"><defs><linearGradient id="gf" x1="0" y1="0" x2="0" y2="1"><stop offset="0" stop-color="#fcebab"/><stop offset="1" stop-color="#f0d274"/></linearGradient></defs><rect x="6.5" y="0.5" width="7" height="5" rx="1" fill="#fbeeb8" stroke="#d9b95c"/><rect x="8" y="1.3" width="4.6" height="1.5" fill="#ffffff"/><rect x="10.3" y="1.3" width="2.3" height="1.5" fill="#3f90ee"/><path d="M0.5 2.3 Q0.5 1.5 1.3 1.5 H5.4 Q6.3 1.5 6.7 2.4 L7.3 3.5 H13.5 V12.5 H0.5 Z" fill="url(#gf)" stroke="#d8b352"/></svg>
<span id="t42" class="t" style="left:50.0px;top:308px;letter-spacing:0.027px;">Text Input</span>
<svg style="left:29px;top:327px;" width="14" height="13" viewBox="0 0 14 13"><defs><linearGradient id="gf" x1="0" y1="0" x2="0" y2="1"><stop offset="0" stop-color="#fcebab"/><stop offset="1" stop-color="#f0d274"/></linearGradient></defs><rect x="6.5" y="0.5" width="7" height="5" rx="1" fill="#fbeeb8" stroke="#d9b95c"/><rect x="8" y="1.3" width="4.6" height="1.5" fill="#ffffff"/><rect x="10.3" y="1.3" width="2.3" height="1.5" fill="#3f90ee"/><path d="M0.5 2.3 Q0.5 1.5 1.3 1.5 H5.4 Q6.3 1.5 6.7 2.4 L7.3 3.5 H13.5 V12.5 H0.5 Z" fill="url(#gf)" stroke="#d8b352"/></svg>
<span id="t43" class="t" style="left:50.0px;top:326px;letter-spacing:-0.070px;">Windows Calendar</span>
<svg style="left:29px;top:345px;" width="14" height="13" viewBox="0 0 14 13"><defs><linearGradient id="gf" x1="0" y1="0" x2="0" y2="1"><stop offset="0" stop-color="#fcebab"/><stop offset="1" stop-color="#f0d274"/></linearGradient></defs><rect x="6.5" y="0.5" width="7" height="5" rx="1" fill="#fbeeb8" stroke="#d9b95c"/><rect x="8" y="1.3" width="4.6" height="1.5" fill="#ffffff"/><rect x="10.3" y="1.3" width="2.3" height="1.5" fill="#3f90ee"/><path d="M0.5 2.3 Q0.5 1.5 1.3 1.5 H5.4 Q6.3 1.5 6.7 2.4 L7.3 3.5 H13.5 V12.5 H0.5 Z" fill="url(#gf)" stroke="#d8b352"/></svg>
<span id="t44" class="t" style="left:50.0px;top:344px;letter-spacing:-0.097px;">Windows Color System</span>
<svg style="left:29px;top:363px;" width="14" height="13" viewBox="0 0 14 13"><defs><linearGradient id="gf" x1="0" y1="0" x2="0" y2="1"><stop offset="0" stop-color="#fcebab"/><stop offset="1" stop-color="#f0d274"/></linearGradient></defs><rect x="6.5" y="0.5" width="7" height="5" rx="1" fill="#fbeeb8" stroke="#d9b95c"/><rect x="8" y="1.3" width="4.6" height="1.5" fill="#ffffff"/><rect x="10.3" y="1.3" width="2.3" height="1.5" fill="#3f90ee"/><path d="M0.5 2.3 Q0.5 1.5 1.3 1.5 H5.4 Q6.3 1.5 6.7 2.4 L7.3 3.5 H13.5 V12.5 H0.5 Z" fill="url(#gf)" stroke="#d8b352"/></svg>
<span id="t45" class="t" style="left:50.0px;top:362px;letter-spacing:-0.108px;">Windows Customer Experience</span>
</div>
<div style="left:284px;top:251px;width:16px;height:386px;background:#f0f0f0;"></div>
<svg style="left:288px;top:256.6px;" width="8" height="7" viewBox="0 0 8 7"><path d="M0.6 5.6 L3.8 1.8 L7 5.6" fill="none" stroke="#606060" stroke-width="2"/></svg>
<div style="left:284px;top:448px;width:15px;height:66px;background:#cdcdcd;"></div>
<svg style="left:288px;top:608.6px;" width="8" height="7" viewBox="0 0 8 7"><path d="M0.6 1.2 L3.8 5 L7 1.2" fill="none" stroke="#606060" stroke-width="2"/></svg>
<div style="left:70px;top:621px;width:230px;height:16px;background:#f0f0f0;"></div>
<svg style="left:75px;top:625px;" width="7" height="8" viewBox="0 0 7 8"><path d="M5.8 0.6 L1.6 4 L5.8 7.4" fill="none" stroke="#606060" stroke-width="1.9"/></svg>
<div style="left:110px;top:621px;width:98px;height:15px;background:#cdcdcd;"></div>
<svg style="left:272px;top:625px;" width="7" height="8" viewBox="0 0 7 8"><path d="M1.2 0.6 L5.4 4 L1.2 7.4" fill="none" stroke="#606060" stroke-width="1.9"/></svg>
<div style="left:305px;top:249px;width:400px;height:372px;background:#fff;border-left:1px solid #a0a0a0;border-top:1px solid #a0a0a0;box-sizing:border-box;"></div>
<div style="left:306px;top:250px;width:400px;height:371px;background:#fff;border-left:1px solid #696969;border-top:1px solid #696969;box-sizing:border-box;"></div>
<div style="left:307px;top:251px;width:400px;height:25px;background:#99b4d1;"></div>
<div style="left:509px;top:266px;width:200px;height:12px;background:#fff;border-top-left-radius:10px;"></div>
<svg style="left:317px;top:257px;" width="14" height="13" viewBox="0 0 14 13"><defs><linearGradient id="gf" x1="0" y1="0" x2="0" y2="1"><stop offset="0" stop-color="#fcebab"/><stop offset="1" stop-color="#f0d274"/></linearGradient></defs><rect x="6.5" y="0.5" width="7" height="5" rx="1" fill="#fbeeb8" stroke="#d9b95c"/><rect x="8" y="1.3" width="4.6" height="1.5" fill="#ffffff"/><rect x="10.3" y="1.3" width="2.3" height="1.5" fill="#3f90ee"/><path d="M0.5 2.3 Q0.5 1.5 1.3 1.5 H5.4 Q6.3 1.5 6.7 2.4 L7.3 3.5 H13.5 V12.5 H0.5 Z" fill="url(#gf)" stroke="#d8b352"/></svg>
<span id="t46" class="t" style="left:341.5px;top:256px;letter-spacing:-0.117px;">Store</span>
<span id="t47" class="t" style="left:311.9px;top:281px;font-weight:bold;letter-spacing:-0.012px;">Turn off the Store application</span>
<span id="t48" class="t" style="left:311.5px;top:314px;letter-spacing:0.069px;">Edit <span style="color:#800080;text-decoration:underline;">policy setting </span></span>
<span id="t49" class="t" style="left:311.5px;top:344px;letter-spacing:-0.104px;">Requirements:</span>
<span id="t50" class="t" style="left:311.5px;top:359px;letter-spacing:-0.261px;">At least Windows Server 2012,</span>
<span id="t51" class="t" style="left:311.5px;top:374px;letter-spacing:-0.101px;">Windows 8 or Windows RT</span>
<span id="t52" class="t" style="left:311.5px;top:404px;letter-spacing:0.062px;">Description:</span>
<span id="t53" class="t" style="left:311.5px;top:419px;letter-spacing:-0.200px;">Denies or allows access to the Store</span>
<span id="t54" class="t" style="left:311.5px;top:434px;letter-spacing:0.198px;">application.</span>
<span id="t55" class="t" style="left:311.5px;top:464px;letter-spacing:-0.081px;">If you enable this setting, access to</span>
<span id="t56" class="t" style="left:311.5px;top:479px;letter-spacing:-0.063px;">the Store application is denied.</span>
<span id="t57" class="t" style="left:311.5px;top:494px;letter-spacing:-0.110px;">Access to the Store is required for</span>
<span id="t58" class="t" style="left:311.5px;top:509px;letter-spacing:0.008px;">installing app updates.</span>
<span id="t59" class="t" style="left:311.5px;top:539px;letter-spacing:0.092px;">If you disable or don't configure this</span>
<span id="t60" class="t" style="left:311.5px;top:554px;letter-spacing:-0.137px;">setting, access to the Store</span>
<span id="t61" class="t" style="left:311.5px;top:569px;letter-spacing:0.059px;">application is allowed.</span>
<span id="t62" class="t" style="left:525.7px;top:280px;letter-spacing:0.049px;">Setting</span>
<div style="left:519px;top:300px;width:183px;height:120px;overflow:hidden;">
<svg style="left:5px;top:2px;" width="13" height="15" viewBox="0 0 13 15"><path d="M0.5 0.5 H9.5 L12.5 3.5 V14.5 H0.5 Z" fill="#ffffff" stroke="#8a8a8a"/><path d="M9.5 0.5 V3.5 H12.5" fill="#ffffff" stroke="#9a9a9a" stroke-width="0.8"/><rect x="1" y="13" width="11" height="1" fill="#e4e4e4"/><rect x="11" y="4" width="1" height="10" fill="#e4e4e4"/><rect x="3" y="4.2" width="1.8" height="1.8" fill="#111"/><rect x="6" y="4.8" width="4" height="1" fill="#8484ac"/><rect x="3" y="7.4" width="1.8" height="1.6" fill="#9c9cc0"/><rect x="6" y="7.8" width="4" height="1" fill="#8484ac"/><rect x="3" y="10.2" width="1.8" height="1.8" fill="#111"/><rect x="6" y="10.8" width="4" height="1" fill="#8484ac"/></svg>
<span id="t63" class="t" style="left:22.1px;top:2px;letter-spacing:0.176px;">Turn off Automatic Download and Install of updates</span>
<svg style="left:5px;top:21px;" width="13" height="15" viewBox="0 0 13 15"><path d="M0.5 0.5 H9.5 L12.5 3.5 V14.5 H0.5 Z" fill="#ffffff" stroke="#8a8a8a"/><path d="M9.5 0.5 V3.5 H12.5" fill="#ffffff" stroke="#9a9a9a" stroke-width="0.8"/><rect x="1" y="13" width="11" height="1" fill="#e4e4e4"/><rect x="11" y="4" width="1" height="10" fill="#e4e4e4"/><rect x="3" y="4.2" width="1.8" height="1.8" fill="#111"/><rect x="6" y="4.8" width="4" height="1" fill="#8484ac"/><rect x="3" y="7.4" width="1.8" height="1.6" fill="#9c9cc0"/><rect x="6" y="7.8" width="4" height="1" fill="#8484ac"/><rect x="3" y="10.2" width="1.8" height="1.8" fill="#111"/><rect x="6" y="10.8" width="4" height="1" fill="#8484ac"/></svg>
<span id="t64" class="t" style="left:22.1px;top:21px;letter-spacing:0.186px;">Turn off Automatic Download of updates on Win8 machines</span>
<svg style="left:5px;top:40px;" width="13" height="15" viewBox="0 0 13 15"><path d="M0.5 0.5 H9.5 L12.5 3.5 V14.5 H0.5 Z" fill="#ffffff" stroke="#8a8a8a"/><path d="M9.5 0.5 V3.5 H12.5" fill="#ffffff" stroke="#9a9a9a" stroke-width="0.8"/><rect x="1" y="13" width="11" height="1" fill="#e4e4e4"/><rect x="11" y="4" width="1" height="10" fill="#e4e4e4"/><rect x="3" y="4.2" width="1.8" height="1.8" fill="#111"/><rect x="6" y="4.8" width="4" height="1" fill="#8484ac"/><rect x="3" y="7.4" width="1.8" height="1.6" fill="#9c9cc0"/><rect x="6" y="7.8" width="4" height="1" fill="#8484ac"/><rect x="3" y="10.2" width="1.8" height="1.8" fill="#111"/><rect x="6" y="10.8" width="4" height="1" fill="#8484ac"/></svg>
<span id="t65" class="t" style="left:22.1px;top:40px;letter-spacing:0.134px;">Turn off the offer to update to the latest version of Windows</span>
<svg style="left:5px;top:59px;" width="13" height="15" viewBox="0 0 13 15"><path d="M0.5 0.5 H9.5 L12.5 3.5 V14.5 H0.5 Z" fill="#ffffff" stroke="#8a8a8a"/><path d="M9.5 0.5 V3.5 H12.5" fill="#ffffff" stroke="#9a9a9a" stroke-width="0.8"/><rect x="1" y="13" width="11" height="1" fill="#e4e4e4"/><rect x="11" y="4" width="1" height="10" fill="#e4e4e4"/><rect x="3" y="4.2" width="1.8" height="1.8" fill="#111"/><rect x="6" y="4.8" width="4" height="1" fill="#8484ac"/><rect x="3" y="7.4" width="1.8" height="1.6" fill="#9c9cc0"/><rect x="6" y="7.8" width="4" height="1" fill="#8484ac"/><rect x="3" y="10.2" width="1.8" height="1.8" fill="#111"/><rect x="6" y="10.8" width="4" height="1" fill="#8484ac"/></svg>
<span id="t66" class="t" style="left:22.1px;top:59px;letter-spacing:0.010px;">Disable all apps from Microsoft Store</span>
<div style="left:20px;top:76px;width:170px;height:19px;background:#0078d7;border:1px dotted #ff8c2e;box-sizing:border-box;"></div>
<svg style="left:5px;top:78px;" width="13" height="15" viewBox="0 0 13 15"><path d="M0.5 0.5 H9.5 L12.5 3.5 V14.5 H0.5 Z" fill="#ffffff" stroke="#8a8a8a"/><path d="M9.5 0.5 V3.5 H12.5" fill="#ffffff" stroke="#9a9a9a" stroke-width="0.8"/><rect x="1" y="13" width="11" height="1" fill="#e4e4e4"/><rect x="11" y="4" width="1" height="10" fill="#e4e4e4"/><rect x="3" y="4.2" width="1.8" height="1.8" fill="#111"/><rect x="6" y="4.8" width="4" height="1" fill="#8484ac"/><rect x="3" y="7.4" width="1.8" height="1.6" fill="#9c9cc0"/><rect x="6" y="7.8" width="4" height="1" fill="#8484ac"/><rect x="3" y="10.2" width="1.8" height="1.8" fill="#111"/><rect x="6" y="10.8" width="4" height="1" fill="#8484ac"/><defs><pattern id="dz" width="2" height="2" patternUnits="userSpaceOnUse"><rect width="1" height="1" fill="#0078d7"/><rect x="1" y="1" width="1" height="1" fill="#0078d7"/></pattern></defs><path d="M0 0 H10 L13 3 V15 H0 Z" fill="url(#dz)" shape-rendering="crispEdges"/></svg>
<span id="t67" class="t" style="left:22.1px;top:78px;color:#fff;letter-spacing:0.039px;">Turn off the Store application</span>
<svg style="left:5px;top:97px;" width="13" height="15" viewBox="0 0 13 15"><path d="M0.5 0.5 H9.5 L12.5 3.5 V14.5 H0.5 Z" fill="#ffffff" stroke="#8a8a8a"/><path d="M9.5 0.5 V3.5 H12.5" fill="#ffffff" stroke="#9a9a9a" stroke-width="0.8"/><rect x="1" y="13" width="11" height="1" fill="#e4e4e4"/><rect x="11" y="4" width="1" height="10" fill="#e4e4e4"/><rect x="3" y="4.2" width="1.8" height="1.8" fill="#111"/><rect x="6" y="4.8" width="4" height="1" fill="#8484ac"/><rect x="3" y="7.4" width="1.8" height="1.6" fill="#9c9cc0"/><rect x="6" y="7.8" width="4" height="1" fill="#8484ac"/><rect x="3" y="10.2" width="1.8" height="1.8" fill="#111"/><rect x="6" y="10.8" width="4" height="1" fill="#8484ac"/></svg>
<span id="t68" class="t" style="left:22.1px;top:97px;letter-spacing:-0.128px;">Only display the private store within the Microsoft Store</span>
</div>
<div style="left:519px;top:602px;width:190px;height:16px;background:#f0f0f0;"></div>
<svg style="left:524px;top:606px;" width="7" height="8" viewBox="0 0 7 8"><path d="M5.8 0.6 L1.6 4 L5.8 7.4" fill="none" stroke="#606060" stroke-width="1.9"/></svg>
<div style="left:536px;top:602px;width:62px;height:15px;background:#cdcdcd;"></div>
<div style="left:305px;top:618px;width:400px;height:1px;background:#e3e3e3;"></div>
<div style="left:302px;top:619px;width:400px;height:40px;background:#f0f0f0;"></div>
<div style="left:305px;top:620px;width:400px;height:1px;background:#696969;"></div>
<svg style="left:305px;top:620px;" width="140" height="20" viewBox="0 0 140 20"><path d="M71.5 0.5 L68.5 10 L73.5 18.5 H126 L133.5 0.5 Z" fill="#f0f0f0" stroke="#6a6a6a"/><path d="M0 0.5 L8.5 18.5 H64.5 L72 0.5" fill="#fff" stroke="#6a6a6a"/><rect x="0.5" y="0" width="71" height="1.2" fill="#fff"/></svg>
<span id="t69" class="t" style="left:317.1px;top:622px;letter-spacing:-0.300px;transform:scaleX(0.9955);">Extended</span>
<span id="t70" class="t" style="left:380.5px;top:622px;letter-spacing:-0.263px;">Standard</span>
<div style="left:302px;top:639px;width:400px;height:1px;background:#d7d7d7;"></div>
<div style="left:518px;top:641px;width:1px;height:17px;background:#d0d0d0;"></div>
<div style="left:651px;top:641px;width:1px;height:17px;background:#d0d0d0;"></div>
<span id="t71" class="t" style="left:69.5px;top:643px;letter-spacing:-0.105px;">6 setting(s)</span>
<div style="left:0px;top:0px;width:703px;height:659px;border:1px solid #1a6dd0;box-sizing:border-box;"></div>
</body></html>
